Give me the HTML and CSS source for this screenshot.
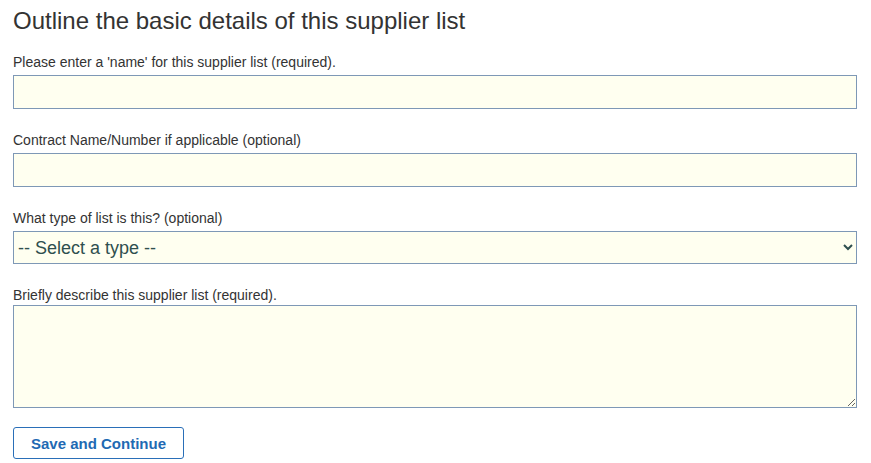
FILE: index.html
```html
<!DOCTYPE html>
<html lang="en">
<head>
<meta charset="utf-8">
<title>Supplier list details</title>
<link rel="stylesheet" href="styles.css">
</head>
<body>
<main class="page">
  <h1 class="title">Outline the basic details of this supplier list</h1>
  <form class="form">
    <div class="field">
      <label class="label" for="name">Please enter a 'name' for this supplier list (required).</label>
      <input class="input" id="name" type="text">
    </div>
    <div class="field">
      <label class="label" for="contract">Contract Name/Number if applicable (optional)</label>
      <input class="input" id="contract" type="text">
    </div>
    <div class="field">
      <label class="label" for="type">What type of list is this? (optional)</label>
      <select class="select" id="type">
        <option>-- Select a type --</option>
      </select>
    </div>
    <div class="field">
      <label class="label label-tight" for="desc">Briefly describe this supplier list (required).</label>
      <textarea class="textarea" id="desc"></textarea>
    </div>
    <div class="actions">
      <button class="button" type="button">Save and Continue</button>
    </div>
  </form>
</main>
</body>
</html>
```

FILE: styles.css
```css
html, body {
  margin: 0;
  padding: 0;
  background: #ffffff;
}
body {
  font-family: "Liberation Sans", Arial, sans-serif;
  color: #333333;
}
.page {
  padding: 0 14px 0 13px;
}
.title {
  margin: 0;
  padding-top: 7px;
  font-size: 24px;
  font-weight: normal;
  line-height: 28px;
  color: #333333;
}
.form {
  display: flex;
  flex-direction: column;
  margin-top: 19px;
}
.field {
  display: flex;
  flex-direction: column;
  margin-bottom: 23px;
}
.label {
  font-size: 14px;
  line-height: 16px;
  margin-bottom: 5px;
  color: #333333;
}
.label-tight {
  margin-bottom: 2px;
}
.input {
  box-sizing: border-box;
  height: 34px;
  width: 100%;
  margin: 0;
  border: 1px solid #7e98b6;
  background: #fffff0;
  border-radius: 0;
  outline: none;
  font-family: inherit;
  font-size: 14px;
}
.select {
  box-sizing: border-box;
  height: 33px;
  width: 100%;
  margin: 0;
  border: 1px solid #7e98b6;
  border-radius: 0;
  background-color: #fffff0;
  color: #2f4f4f;
  font-family: "Liberation Sans", Arial, sans-serif;
  font-size: 18px;
  padding: 0;
}
.textarea {
  box-sizing: border-box;
  height: 103px;
  width: 100%;
  margin: 0;
  border: 1px solid #7e98b6;
  background: #fffff0;
  border-radius: 0;
  font-family: inherit;
  resize: both;
}
.actions {
  display: flex;
  margin-top: -4px;
}
.button {
  box-sizing: border-box;
  height: 32px;
  width: 171px;
  border: 1px solid #2a6fb8;
  border-radius: 3px;
  background: #ffffff;
  color: #1f6ab3;
  font-family: "Liberation Sans", Arial, sans-serif;
  font-weight: bold;
  font-size: 15px;
  padding: 0;
  cursor: pointer;
}
```
